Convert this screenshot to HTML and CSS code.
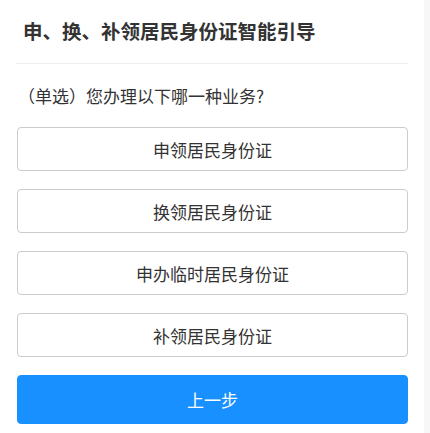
FILE: index.html
```html
<!DOCTYPE html>
<html lang="zh-CN">
<head>
<meta charset="utf-8">
<title>申、换、补领居民身份证智能引导</title>
<link rel="stylesheet" href="styles.css">
</head>
<body>
<div class="page">
  <div class="header">
    <h1 class="title">申、换、补领居民身份证智能引导</h1>
  </div>
  <div class="content">
    <p class="question">（单选）您办理以下哪一种业务?</p>
    <div class="options">
      <button class="option">申领居民身份证</button>
      <button class="option">换领居民身份证</button>
      <button class="option">申办临时居民身份证</button>
      <button class="option">补领居民身份证</button>
    </div>
    <button class="back">上一步</button>
  </div>
</div>
</body>
</html>
```

FILE: styles.css
```css
html {
  background: #f7f7f7;
}
body {
  margin: 0;
  font-family: "Noto Sans CJK SC", "Noto Sans", sans-serif;
  color: #333;
}
.page {
  width: 424px;
  min-height: 433px;
  background: #fff;
}
.header {
  margin: 0 16px;
  padding: 18px 7px 0;
  height: 64px;
  box-sizing: border-box;
  border-bottom: 1px solid #eeeeee;
}
.title {
  margin: 0;
  font-size: 19.5px;
  line-height: 26px;
  font-weight: 700;
  color: #333;
}
.content {
  padding: 0 16px 0 17px;
}
.question {
  margin: 20px 0 0 1px;
  font-size: 17px;
  line-height: 24px;
  color: #333;
}
.options {
  display: flex;
  flex-direction: column;
  gap: 18px;
  margin-top: 19px;
}
.option,
.back {
  display: block;
  width: 100%;
  font-family: inherit;
  font-size: 17px;
  border-radius: 4px;
  cursor: pointer;
  padding: 0;
}
.option {
  height: 44px;
  background: #fff;
  border: 1px solid #cccccc;
  color: #333;
}
.back {
  margin-top: 18px;
  height: 49px;
  background: #1890ff;
  border: 1px solid #1890ff;
  color: #fff;
}
```
